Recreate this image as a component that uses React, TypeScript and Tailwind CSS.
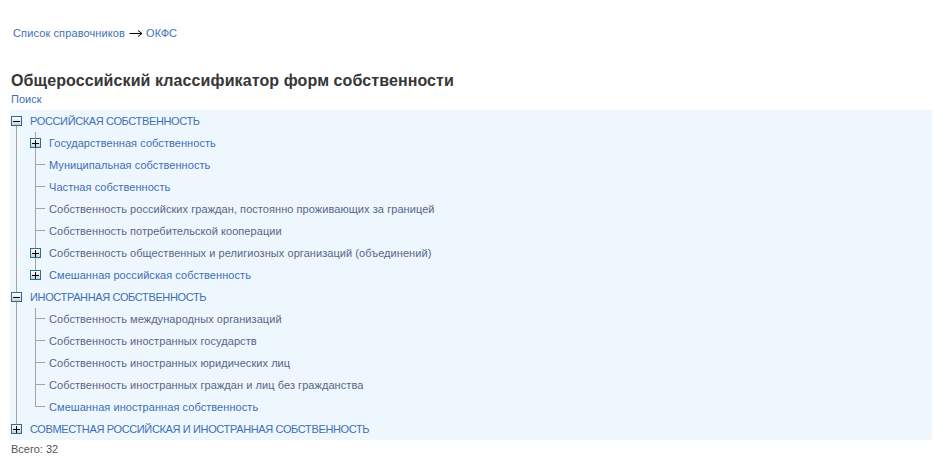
import React from "react";

type Node = {
	title: string;
	expandable?: boolean;
	muted?: boolean;
	children?: Node[];
};

const tree: Node[] = [
	{
		title: "РОССИЙСКАЯ СОБСТВЕННОСТЬ",
		expandable: true,
		children: [
			{ title: "Государственная собственность", expandable: true },
			{ title: "Муниципальная собственность" },
			{ title: "Частная собственность" },
			{ title: "Собственность российских граждан, постоянно проживающих за границей", muted: true },
			{ title: "Собственность потребительской кооперации", muted: true },
			{ title: "Собственность общественных и религиозных организаций (объединений)", expandable: true, muted: true },
			{ title: "Смешанная российская собственность", expandable: true },
		],
	},
	{
		title: "ИНОСТРАННАЯ СОБСТВЕННОСТЬ",
		expandable: true,
		children: [
			{ title: "Собственность международных организаций", muted: true },
			{ title: "Собственность иностранных государств", muted: true },
			{ title: "Собственность иностранных юридических лиц", muted: true },
			{ title: "Собственность иностранных граждан и лиц без гражданства", muted: true },
			{ title: "Смешанная иностранная собственность" },
		],
	},
	{ title: "СОВМЕСТНАЯ РОССИЙСКАЯ И ИНОСТРАННАЯ СОБСТВЕННОСТЬ", expandable: true },
];

function ToggleIcon({ open }: { open: boolean }) {
	return (
		<div className="ml-[1px] w-[11px] h-[10px] border border-[#2f6c8a] bg-gradient-to-b from-white to-[#c4d3dc] flex items-center justify-center shrink-0">
			<div className="relative w-[7px] h-[7px] flex items-center justify-center">
				<div className="w-[7px] h-px bg-black" />
				{!open && <div className="absolute left-[3px] top-0 w-px h-[7px] bg-black" />}
			</div>
		</div>
	);
}

function Guide({ show }: { show: boolean }) {
	return (
		<div className="w-[19px] h-full shrink-0">
			{show && <div className="ml-[6px] h-full border-l border-[#a3a3a3]" />}
		</div>
	);
}

function Connector({ node, first, last, root }: { node: Node; first: boolean; last: boolean; root: boolean }) {
	const open = !!node.children;
	if (node.expandable) {
		return (
			<div className="w-[19px] h-full shrink-0 flex flex-col">
				<div className={`flex-1 ml-[6px] ${root && first ? "" : "border-l border-[#a3a3a3]"}`} />
				<ToggleIcon open={open} />
				<div className={`flex-1 ml-[6px] ${last && !open ? "" : "border-l border-[#a3a3a3]"}`} />
			</div>
		);
	}
	return (
		<div className="w-[19px] h-full shrink-0 flex flex-col">
			<div className="h-[11px] ml-[6px] w-[10px] border-l border-b border-[#a3a3a3]" />
			<div className={`flex-1 ml-[6px] ${last ? "" : "border-l border-[#a3a3a3]"}`} />
		</div>
	);
}

function Row({ node, guides, first, last, root }: { node: Node; guides: boolean[]; first: boolean; last: boolean; root: boolean }) {
	return (
		<div className="flex items-stretch h-[22px]">
			{guides.map((g, i) => (
				<Guide key={i} show={g} />
			))}
			<Connector node={node} first={first} last={last} root={root} />
			<span
				className={`pl-[1px] self-center whitespace-nowrap ${root ? "tracking-[-0.36px]" : "tracking-[0.06px]"} ${node.muted ? "text-[#56678a]" : "text-[#3f6fb5]"}`}
			>
				{node.title}
			</span>
		</div>
	);
}

function Branch({ nodes, guides }: { nodes: Node[]; guides: boolean[] }) {
	return (
		<>
			{nodes.map((n, i) => {
				const last = i === nodes.length - 1;
				return (
					<React.Fragment key={n.title}>
						<Row node={n} guides={guides} first={i === 0} last={last} root={guides.length === 0} />
						{n.children && <Branch nodes={n.children} guides={[...guides, !last]} />}
					</React.Fragment>
				);
			})}
		</>
	);
}

export default function App() {
	return (
		<div className="w-[952px] h-[470px] bg-white px-[10px] text-[11px] leading-[14px] font-['Liberation_Sans',Arial,sans-serif]">
			<div className="pt-[26px] pl-[3px] flex items-center h-[39px] text-[#3f6fb5]">
				<span className="tracking-[0.12px]">Список справочников</span>
				<svg width="14" height="7" viewBox="0 0 14 7" className="ml-[4px] mr-[3px] mt-[1px]">
					<path d="M0.5 3.5H12.5M9 0.5L13 3.5L9 6.5" fill="none" stroke="#000" strokeWidth="1" />
				</svg>
				<span>ОКФС</span>
			</div>
			<h1 className="mt-[32px] pl-[1px] text-[16px] leading-[19px] font-bold text-[#363636] tracking-[0.1px]">
				Общероссийский классификатор форм собственности
			</h1>
			<div className="mt-[2px] pl-[1px] text-[#3f6fb5]">Поиск</div>
			<div className="mt-[4px] w-[922px] bg-[#eef6fe]">
				<Branch nodes={tree} guides={[]} />
			</div>
			<div className="mt-[2px] pl-[1px] text-[#555]">Всего: 32</div>
		</div>
	);
}
